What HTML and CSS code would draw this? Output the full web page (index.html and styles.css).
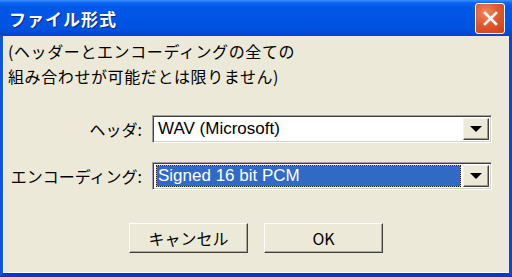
FILE: index.html
```html
<!DOCTYPE html>
<html lang="ja">
<head>
    <meta charset="UTF-8">
    <meta name="viewport" content="width=device-width, initial-scale=1.0">
    <title>ファイル形式</title>
    <link rel="stylesheet" href="styles.css">
</head>
<body>

<div class="window">
    <!-- Заголовок окна -->
    <div class="titlebar">
        <span class="title">ファイル形式</span>
        <div class="close-btn">
            <svg width="17" height="17" viewBox="0 0 17 17">
                <path d="M3 3 L14 14 M14 3 L3 14" stroke="#fff" stroke-width="2.6" stroke-linecap="square"/>
            </svg>
        </div>
    </div>

    <div class="frame">
        <p class="note">(ヘッダーとエンコーディングの全ての<br>組み合わせが可能だとは限りません)</p>

        <div class="form">
            <label class="field-label">ヘッダ:</label>
            <div class="combo">
                <span class="combo-value">WAV (Microsoft)</span>
                <span class="combo-arrow"><span class="triangle"></span></span>
            </div>

            <label class="field-label">エンコーディング:</label>
            <div class="combo">
                <span class="combo-value selected">Signed 16 bit PCM</span>
                <span class="combo-arrow"><span class="triangle"></span></span>
            </div>
        </div>

        <div class="buttons">
            <button class="btn">キャンセル</button>
            <button class="btn">OK</button>
        </div>
    </div>
</div>

</body>
</html>
```

FILE: styles.css
```css
/* Основные стили */
body {
    margin: 0;
    font-family: "Noto Sans CJK JP", "Noto Sans", sans-serif;
}

.window {
    width: 512px;
    height: 277px;
    display: flex;
    flex-direction: column;
    overflow: hidden;
}

/* Заголовок */
.titlebar {
    height: 36px;
    flex-shrink: 0;
    display: flex;
    align-items: center;
    justify-content: space-between;
    padding: 0 7px 0 9px;
    background: linear-gradient(to bottom, #3b8ffd 0, #0b63f2 3px, #0058e7 8px, #0055e4 50%, #0052df 80%, #0043c9 100%);
}
.title {
    color: #fff;
    font-size: 17px;
    font-weight: bold;
    letter-spacing: 1px;
    text-shadow: 1px 1px 0 #0a2a8a;
}
.close-btn {
    width: 28px;
    height: 29px;
    margin-top: 1px;
    border: 1px solid #fff;
    border-radius: 3px;
    display: flex;
    align-items: center;
    justify-content: center;
    background: radial-gradient(circle at 35% 30%, #ef8a62 0, #e2582f 45%, #c8401a 100%);
}

/* Тело окна */
.frame {
    flex: 1;
    background: #ece9d8;
    border-left: 3px solid #0b55e6;
    border-right: 3px solid #0a45d8;
    border-bottom: 4px solid #0638c8;
    box-shadow: inset 1px 0 0 #fffbf0, inset 0 -1px 0 #fffbf0;
}
.note {
    margin: 0;
    padding: 3px 0 0 5px;
    font-size: 16px;
    line-height: 25px;
    letter-spacing: 0.6px;
    color: #000;
}

.form {
    display: grid;
    grid-template-columns: 142px 340px;
    column-gap: 7px;
    row-gap: 19px;
    align-items: center;
    margin-top: 26px;
}
.field-label {
    text-align: right;
    padding-right: 3px;
    font-size: 16px;
    color: #000;
}

/* Комбобокс */
.combo {
    height: 28px;
    box-sizing: border-box;
    display: flex;
    align-items: stretch;
    background: #fff;
    border: 1px solid;
    border-color: #a0a0a0 #fff #fff #a0a0a0;
    box-shadow: inset 1px 1px 0 #404040, inset -1px -1px 0 #d4d0c8;
    padding: 2px;
}
.combo-value {
    flex: 1;
    font-family: "Liberation Sans", Arial, sans-serif;
    font-size: 17px;
    line-height: 22px;
    padding-left: 3px;
    color: #000;
}
.combo-value.selected {
    margin: 0 2px 0 1px;
    padding-left: 1px;
    color: #fff;
    border: 1px dotted #1a1a1a;
    background: linear-gradient(#316ac5, #316ac5) padding-box, linear-gradient(#e7b44c, #e7b44c) border-box;
    line-height: 20px;
}
.combo-arrow {
    width: 26px;
    box-sizing: border-box;
    background: #ece9d8;
    border: 1px solid;
    border-color: #f4f2ea #404040 #404040 #f4f2ea;
    box-shadow: inset -1px -1px 0 #9d9a8c;
    display: flex;
    align-items: center;
    justify-content: center;
}
.triangle {
    width: 0;
    height: 0;
    border-left: 6px solid transparent;
    border-right: 6px solid transparent;
    border-top: 6px solid #000;
}

/* Кнопки */
.buttons {
    display: flex;
    justify-content: center;
    gap: 16px;
    margin-top: 33px;
}
.btn {
    width: 119px;
    height: 30px;
    font-family: "Noto Sans CJK JP", "Noto Sans", sans-serif;
    font-size: 16px;
    color: #000;
    background: #ece9d8;
    border: 1px solid;
    border-color: #fff #404040 #404040 #fff;
    box-shadow: inset -1px -1px 0 #aca899;
    padding: 0;
    cursor: pointer;
}
```
